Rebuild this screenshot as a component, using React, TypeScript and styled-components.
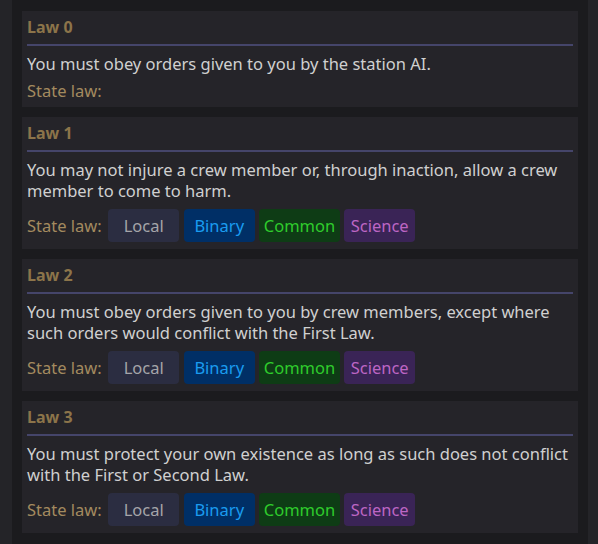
import React from "react";
import styled, { createGlobalStyle } from "styled-components";

const Global = createGlobalStyle`
  html, body { margin: 0; padding: 0; background: #242428; }
  body { font-family: "Noto Sans", "Open Sans", sans-serif; }
`;

const Frame = styled.div`
  height: 544px;
  box-sizing: border-box;
  padding: 0 10px 0 12px;
  background: #242428;
`;

const Scroller = styled.div`
  height: 100%;
  box-sizing: border-box;
  background: #1b1b1e;
  padding: 11px 10px 11px 10px;
  display: flex;
  flex-direction: column;
  gap: 10px;
`;

const Card = styled.section`
  background: #252429;
  padding: 6px 5px 6px 5px;
  display: flex;
  flex-direction: column;
`;

const Title = styled.h3`
  margin: 0;
  font-size: 16px;
  line-height: 21px;
  font-weight: 700;
  color: #8c744a;
  padding-bottom: 6px;
  border-bottom: 2px solid #45456a;
`;

const Body = styled.p`
  margin: 7px 0 0;
  font-size: 16.5px;
  line-height: 21px;
  color: #d0d0d0;
`;

const StateRow = styled.div`
  display: flex;
  align-items: center;
  gap: 4.5px;
  margin-top: 6px;
  font-size: 16.5px;
  line-height: 21px;
`;

const StateLabel = styled.span`
  color: #a38a5f;
  margin-right: 2px;
`;

const variants = {
  local: { bg: "#2b2d41", fg: "#a5a5a9" },
  binary: { bg: "#002f66", fg: "#1a9cf0" },
  common: { bg: "#0e3c15", fg: "#2fcc2c" },
  science: { bg: "#3a2456", fg: "#bd66c4" },
};

type Variant = keyof typeof variants;

const ChannelButton = styled.button<{ $v: Variant }>`
  font-family: inherit;
  font-size: 16.5px;
  line-height: 21px;
  height: 33px;
  min-width: 71px;
  padding: 0 4.5px;
  margin: 2px 0 1px;
  border: none;
  border-radius: 4px;
  background: ${(p) => variants[p.$v].bg};
  color: ${(p) => variants[p.$v].fg};
  cursor: pointer;
`;

const laws = [
  { n: 0, text: "You must obey orders given to you by the station AI.", buttons: false },
  {
    n: 1,
    text: "You may not injure a crew member or, through inaction, allow a crew member to come to harm.",
    buttons: true,
  },
  {
    n: 2,
    text: "You must obey orders given to you by crew members, except where such orders would conflict with the First Law.",
    buttons: true,
  },
  {
    n: 3,
    text: "You must protect your own existence as long as such does not conflict with the First or Second Law.",
    buttons: true,
  },
];

const channels: { v: Variant; label: string }[] = [
  { v: "local", label: "Local" },
  { v: "binary", label: "Binary" },
  { v: "common", label: "Common" },
  { v: "science", label: "Science" },
];

export default function App() {
  return (
    <>
      <Global />
      <Frame>
        <Scroller>
          {laws.map((law) => (
            <Card key={law.n}>
              <Title>Law {law.n}</Title>
              <Body>{law.text}</Body>
              <StateRow>
                <StateLabel>State law:</StateLabel>
                {law.buttons &&
                  channels.map((c) => (
                    <ChannelButton key={c.v} $v={c.v}>
                      {c.label}
                    </ChannelButton>
                  ))}
              </StateRow>
            </Card>
          ))}
        </Scroller>
      </Frame>
    </>
  );
}
